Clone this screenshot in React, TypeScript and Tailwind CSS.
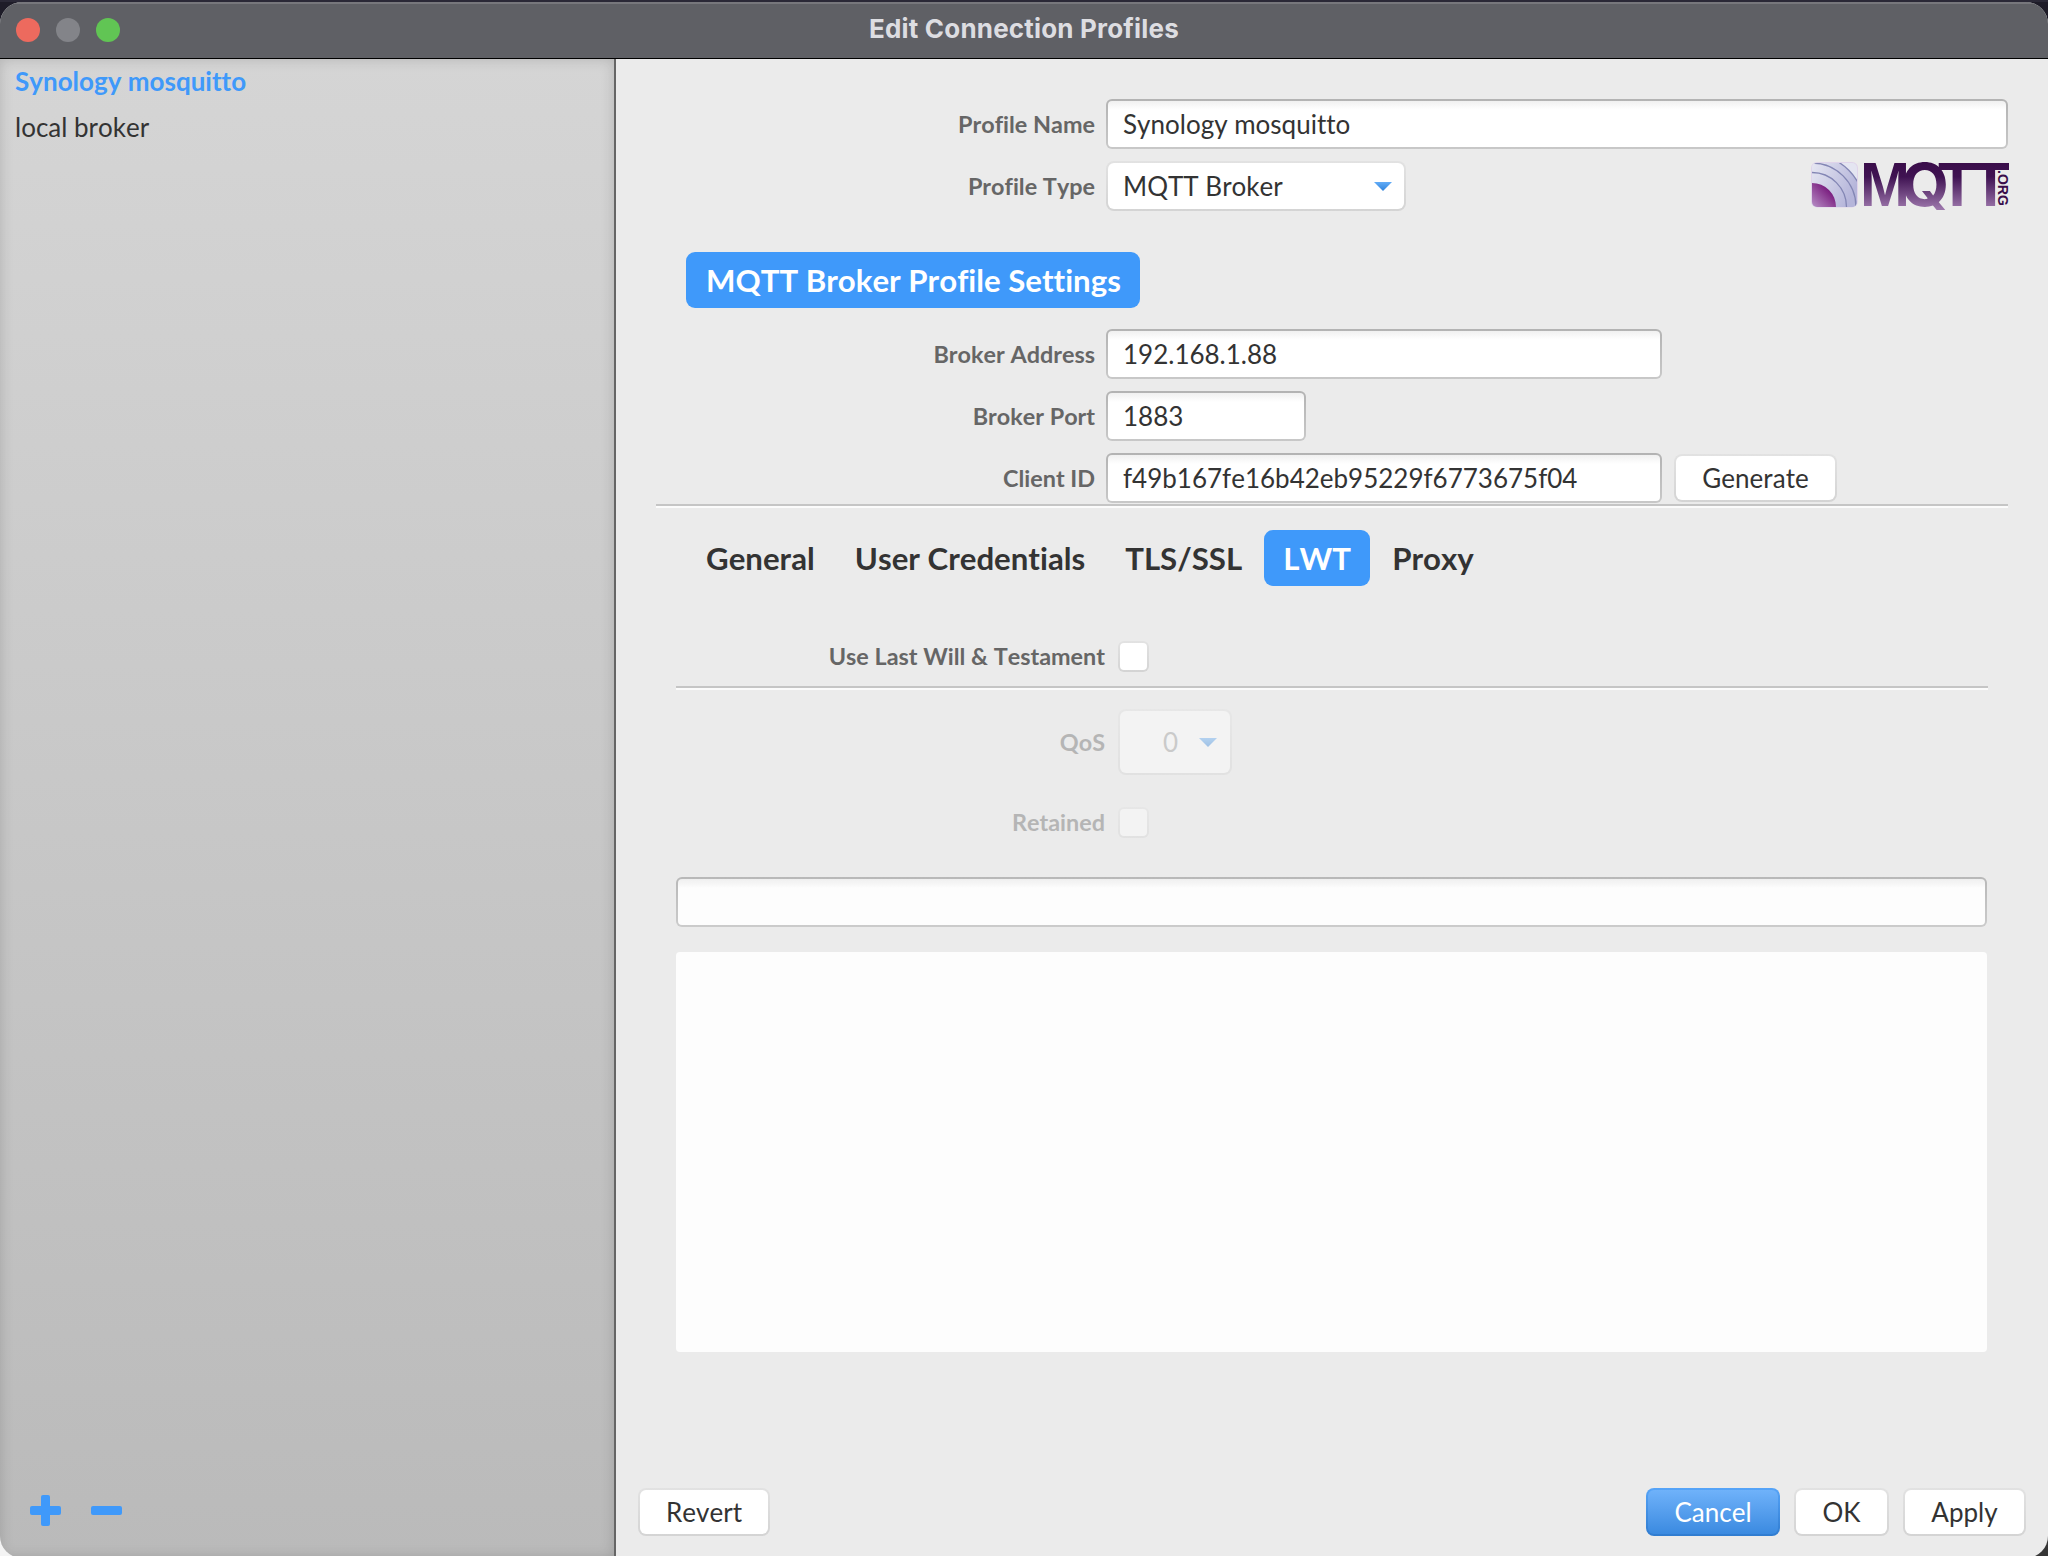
import type { ReactNode } from "react";
import clsx from "clsx";

const profiles = ["Synology mosquitto", "local broker"];
const tabs = ["General", "User Credentials", "TLS/SSL", "LWT", "Proxy"];

function Arrow() {
  return (
    <svg className="block h-[9px] w-[18px] flex-shrink-0" viewBox="0 0 18 9">
      <defs>
        <linearGradient id="arrow" x1="0" y1="0" x2="0" y2="1">
          <stop offset="0" stopColor="#61acf7" />
          <stop offset="1" stopColor="#3083dc" />
        </linearGradient>
      </defs>
      <path d="M0 0h18L9 9z" fill="url(#arrow)" />
    </svg>
  );
}

function Label({ className, children }: { className: string; children: ReactNode }) {
  return (
    <div className={clsx("text-right text-[23.4px] leading-[50px] font-bold text-[#666]", className)}>{children}</div>
  );
}

// gray frame, darker on top, with a soft inset shadow under the top edge
function Field({ className, children }: { className: string; children?: ReactNode }) {
  return (
    <div className={clsx("h-[50px] rounded-[6px] bg-linear-to-b from-[#b3b3b3] to-[#c8c8c8] p-[2px]", className)}>
      <div className="h-full rounded-[4px] bg-linear-to-b from-[#f0f0f0] to-white to-[9px] pl-[15px] text-[26px] leading-[46px]">
        {children}
      </div>
    </div>
  );
}

// outer frame shared by buttons and combos
function Raised({ className, children }: { className: string; children?: ReactNode }) {
  return (
    <div className={clsx("rounded-[8px] bg-linear-to-b from-[#e2e2e2] to-[#d4d4d4] p-[2px]", className)}>
      <div className="flex h-full items-center rounded-[6px] bg-white text-[26px]">{children}</div>
    </div>
  );
}

function Button({ className, children }: { className: string; children: ReactNode }) {
  return (
    <Raised className={clsx("h-[48px]", className)}>
      <span className="w-full text-center leading-[44px]">{children}</span>
    </Raised>
  );
}

function Checkbox() {
  return (
    <div className="h-[31px] w-[31px] rounded-[6px] bg-linear-to-b from-[#e2e2e2] to-[#d4d4d4] p-[2px]">
      <div className="h-full rounded-[4px] bg-white" />
    </div>
  );
}

function Separator() {
  return <div className="h-[4px] border-t-2 border-[#c5c5c5] bg-[#fbfbfb]" />;
}

function MqttLogo() {
  return (
    <svg className="block h-[50px] w-[204px] overflow-visible" viewBox="0 0 204 50">
      <defs>
        <linearGradient id="word" gradientUnits="userSpaceOnUse" x1="0" y1="-43" x2="0" y2="3">
          <stop offset="0" stopColor="#3a0d4a" />
          <stop offset="0.3" stopColor="#3f1252" />
          <stop offset="1" stopColor="#9c76ab" />
        </linearGradient>
        <linearGradient id="core" x1="0" y1="1" x2="1" y2="0">
          <stop offset="0" stopColor="#b78fc6" />
          <stop offset="0.7" stopColor="#7b1f80" />
          <stop offset="1" stopColor="#6a1170" />
        </linearGradient>
        <linearGradient id="band" gradientUnits="userSpaceOnUse" x1="4" y1="3" x2="49" y2="25">
          <stop offset="0" stopColor="#e6e7f2" />
          <stop offset="1" stopColor="#b5b5da" />
        </linearGradient>
        <clipPath id="tile">
          <rect x="4" y="3" width="45" height="44" rx="5" />
        </clipPath>
      </defs>
      <rect x="3" y="2" width="47" height="45.500" rx="6" fill="#e0d4ea" />
      <g clipPath="url(#tile)" stroke="#8386b4" strokeWidth="1.3">
        <rect x="4" y="3" width="45" height="44" fill="#e4e5f1" stroke="none" />
        <circle cx="4" cy="47" r="52" fill="url(#band)" />
        <circle cx="4" cy="47" r="44" fill="url(#band)" />
        <circle cx="4" cy="47" r="34.500" fill="url(#band)" />
        <path d="M4 23A24 24 0 0 1 28 47H4z" fill="url(#core)" stroke="none" />
      </g>
      <g fill="url(#word)" fontFamily="Liberation Sans" fontWeight="bold" fontSize="62.500">
        <text transform="translate(52 46) scale(0.960 1)">M</text>
        <text transform="translate(92.900 46) scale(1.040 1)" fontFamily="Inter" fontSize="59.500">Q</text>
        <text transform="translate(130.100 46)">T</text>
        <text transform="translate(163.600 46)">T</text>
      </g>
      <text
        transform="translate(190 10) rotate(90)"
        fontFamily="Liberation Sans"
        fontWeight="bold"
        fontSize="15"
        fill="#3a0d4a"
        textLength="36"
        lengthAdjust="spacingAndGlyphs"
      >
        .ORG
      </text>
    </svg>
  );
}

export default function App() {
  return (
    <div className="h-[1556px] w-[2048px] overflow-hidden bg-linear-to-r from-[#f4f4f4] from-50% to-[#363636] to-50% font-[Lato,sans-serif] text-[#333] [font-kerning:none] [font-variant-ligatures:none]">
      <div className="h-[2px] bg-[#2a2836]" />
      <div className="bg-linear-to-b from-[#1e1c28] from-[60px] to-transparent to-[60px]">
        <div className="flex h-[1556px] flex-col overflow-hidden rounded-[22px] bg-[#ebebeb]">
          <header className="flex h-[57px] flex-shrink-0 items-start border-t-2 border-b border-t-[#77777c] border-b-black bg-[#5f6065] pt-[14px] pl-4">
            <div className="flex w-[200px] gap-4">
              <div className="h-6 w-6 rounded-full bg-[#ed6a5e]" />
              <div className="h-6 w-6 rounded-full bg-[#838489]" />
              <div className="h-6 w-6 rounded-full bg-[#61c554]" />
            </div>
            <div className="-mt-[4px] flex-1 pr-[216px] text-center font-[Inter,sans-serif] text-[26px] leading-[30px] font-bold tracking-[0.18px] text-[#dddde1] [font-kerning:auto]">
              Edit Connection Profiles
            </div>
          </header>

          <div className="flex min-h-0 flex-1">
            <aside className="flex w-[616px] flex-shrink-0 flex-col border-r-2 border-[#656565] bg-linear-to-b from-[#d5d5d5] to-[#bababa] shadow-[inset_0_0_14px_rgba(0,0,0,0.16)]">
              <ul className="-mt-[1px] flex-1 pl-[15px] text-[26px] leading-[46px]">
                {profiles.map((p, i) => (
                  <li key={p} className={clsx(i === 0 && "font-bold text-[#3f99fa]")}>{p}</li>
                ))}
              </ul>
              <div className="flex h-[94px] gap-[30px] pt-[31px] pl-[30px]">
                <svg className="h-[31px] w-[31px]" viewBox="0 0 31 31" fill="#3f99fa">
                  <rect x="11" y="0" width="9" height="31" rx="2" />
                  <rect x="0" y="11" width="31" height="9" rx="2" />
                </svg>
                <svg className="h-[31px] w-[31px]" viewBox="0 0 31 31" fill="#3f99fa">
                  <rect x="0" y="11" width="31" height="9" rx="2" />
                </svg>
              </div>
            </aside>

            <main className="flex min-w-0 flex-1 flex-col pt-[40px]">
              <section className="px-[40px]">
                <div className="flex">
                  <Label className="w-[439px]">Profile Name</Label>
                  <Field className="ml-[11px] w-[902px]">Synology mosquitto</Field>
                </div>
                <div className="mt-3 flex h-[50px]">
                  <Label className="w-[439px]">Profile Type</Label>
                  <Raised className="ml-[11px] h-[50px] w-[300px]">
                    <span className="flex-1 pl-[15px]">MQTT Broker</span>
                    <span className="pr-[12px]"><Arrow /></span>
                  </Raised>
                  <div className="-mt-[1px] -mr-[4px] ml-auto"><MqttLogo /></div>
                </div>
              </section>

              <h2 className="mt-[41px] ml-[70px] h-[56px] w-[454px] rounded-[9px] bg-[#3f99fa] pl-[20px] text-[31.2px] leading-[56px] font-bold whitespace-nowrap text-white">
                MQTT Broker Profile Settings
              </h2>

              <section className="mt-[21px] flex flex-col gap-3 pl-[40px]">
                <div className="flex">
                  <Label className="w-[439px]">Broker Address</Label>
                  <Field className="ml-[11px] w-[556px]">192.168.1.88</Field>
                </div>
                <div className="flex">
                  <Label className="w-[439px]">Broker Port</Label>
                  <Field className="ml-[11px] w-[200px]">1883</Field>
                </div>
                <div className="flex items-center">
                  <Label className="w-[439px]">Client ID</Label>
                  <Field className="ml-[11px] w-[556px]">f49b167fe16b42eb95229f6773675f04</Field>
                  <Button className="ml-[12px] w-[163px]">Generate</Button>
                </div>
              </section>

              <div className="mx-[40px] mt-[1px]"><Separator /></div>

              <nav className="mt-[22px] ml-[70px] flex">
                {tabs.map((t) => (
                  <div
                    key={t}
                    className={clsx(
                      "h-[56px] rounded-[9px] text-[31.2px] leading-[56px] font-bold",
                      t === "LWT" ? "mr-[2px] ml-[2px] w-[106px] bg-[#3f99fa] text-center text-white" : "px-[20px]"
                    )}
                  >
                    {t}
                  </div>
                ))}
              </nav>

              <section className="mt-[45px] px-[60px]">
                <div className="flex h-[51px] items-center">
                  <Label className="-mt-[2px] w-[429px]">Use Last Will &amp; Testament</Label>
                  <div className="ml-[13px]"><Checkbox /></div>
                </div>
                <div className="mt-[4px]"><Separator /></div>

                <div className="mt-[19px] flex h-[66px] items-center">
                  <Label className="w-[429px] opacity-40">QoS</Label>
                  <Raised className="ml-[13px] h-[66px] w-[114px] opacity-40">
                    <span className="flex-1 pl-[43px] text-[#999]">0</span>
                    <span className="pr-[13px]"><Arrow /></span>
                  </Raised>
                </div>
                <div className="mt-[22px] flex h-[51px] items-center opacity-40">
                  <Label className="-mt-[2px] w-[429px]">Retained</Label>
                  <div className="ml-[13px]"><Checkbox /></div>
                </div>

                <Field className="mt-[29px] w-[1311px] opacity-90" />
                <div className="mt-[25px] h-[400px] w-[1311px] rounded-[4px] bg-[#fdfdfd]" />
              </section>

              <footer className="mt-auto mb-[22px] flex pr-[22px] pl-[22px]">
                <Button className="w-[132px]">Revert</Button>
                <div className="ml-auto flex">
                  <div className="h-[48px] w-[134px] rounded-[8px] bg-linear-to-b from-[#56a4f8] to-[#2f7cd0] p-[2px]">
                    <div className="h-full rounded-[6px] bg-linear-to-b from-[#6fb2fa] to-[#3a8ae0] text-center text-[26px] leading-[44px] text-white">
                      Cancel
                    </div>
                  </div>
                  <Button className="ml-[14px] w-[95px]">OK</Button>
                  <Button className="ml-[14px] w-[123px]">Apply</Button>
                </div>
              </footer>
            </main>
          </div>
        </div>
      </div>
    </div>
  );
}
